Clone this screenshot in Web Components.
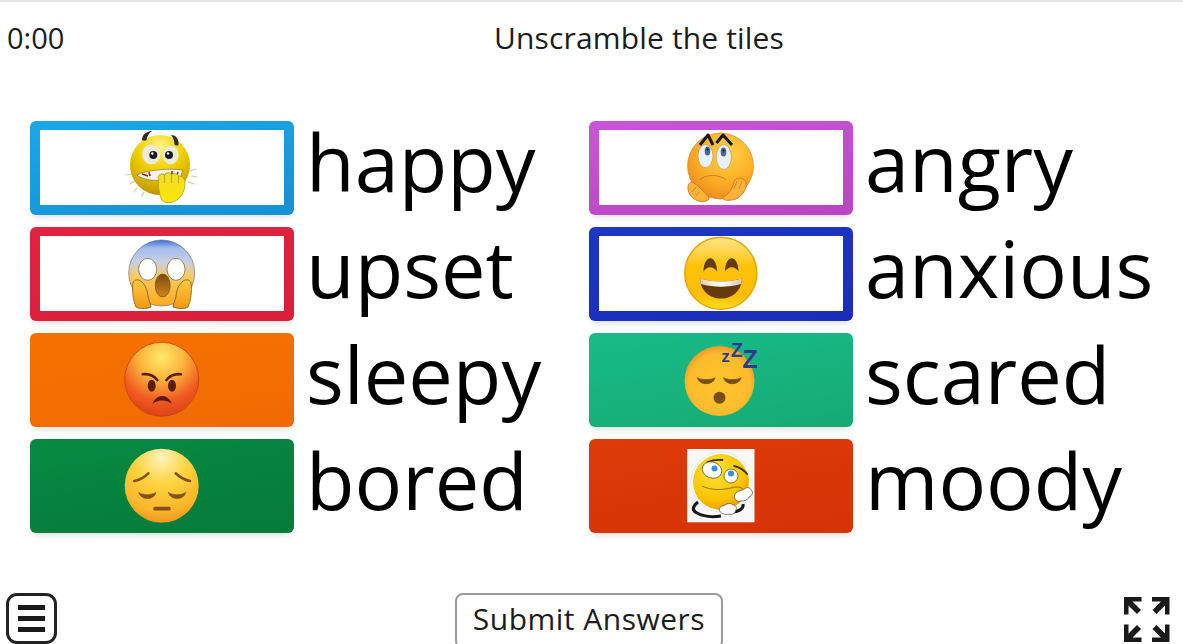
<!DOCTYPE html>
<html>
<head>
<meta charset="utf-8">
<title>Unscramble the tiles</title>
<style>
  html, body { margin: 0; height: 100%; overflow: hidden; background: #fff; }
  body { font-family: "Open Sans", sans-serif; color: #1c1c1c; }
</style>
</head>
<body>
<game-screen>
  <top-bar slot="top" title-text="Unscramble the tiles">0:00</top-bar>
  <tile-board slot="main">
    <match-row color="#1ba8e6" color2="#1590d4" outline face="nailbite">happy</match-row>
    <match-row color="#c955d8" color2="#b945c4" outline face="worried">angry</match-row>
    <match-row color="#e0243f" color2="#d91f3a" outline face="scream">upset</match-row>
    <match-row color="#1e36c6" color2="#1a2db8" outline face="grin">anxious</match-row>
    <match-row color="#f57200" color2="#f06a04" face="angry">sleepy</match-row>
    <match-row color="#18bb88" color2="#16aa74" face="sleepy">scared</match-row>
    <match-row color="#078a42" color2="#067a3a" face="pensive">bored</match-row>
    <match-row color="#df3a0a" color2="#d63206" face="moody">moody</match-row>
  </tile-board>
  <bottom-bar slot="bottom">Submit Answers</bottom-bar>
</game-screen>

<script>
const faces = {
  nailbite: `
    <defs>
      <radialGradient id="a" cx=".5" cy=".2" r=".85"><stop offset="0" stop-color="#fff48a"/><stop offset=".45" stop-color="#f0d000"/><stop offset=".85" stop-color="#c9a400"/><stop offset="1" stop-color="#a98600"/></radialGradient>
      <linearGradient id="b" x1="0" y1="0" x2="0" y2="1"><stop offset="0" stop-color="#f0dc30"/><stop offset="1" stop-color="#ffe600"/></linearGradient>
    </defs>
    <g stroke="#cfc9ae" stroke-width="1.200" stroke-linecap="round">
      <path d="M6 49l6-1M10 58l5-3M14 66l3-4M70 45l6-2M68 56l6 2M72 50l5 1M22 70l2-4"/>
    </g>
    <circle cx="40" cy="39" r="30" fill="url(#a)"/>
    <path d="M22 14c0-5 4-8.500 10-9-3 2-5 5-5.500 9-1.500 1-3 1-4.500 0zM51 9c5 0 8 4 7.500 10-1.500 1-3 .5-4-.5 0-3.500-1-6.500-3.500-9.500z" fill="#2b2b22"/>
    <ellipse cx="31.200" cy="28.500" rx="9" ry="9.800" fill="#ecebdc"/>
    <ellipse cx="50.800" cy="29" rx="7.800" ry="9.300" fill="#ecebdc"/>
    <circle cx="33.300" cy="29" r="4" fill="#1b1b1b"/><circle cx="49" cy="29" r="4" fill="#1b1b1b"/>
    <circle cx="32.300" cy="27.500" r="1.200" fill="#fff"/><circle cx="48" cy="27.500" r="1.200" fill="#fff"/>
    <path d="M16.700 49c10-5 32-7 46-5l-2 7c-12 4-34 6-44-2z" fill="#f4f1e8" stroke="#7d6a10" stroke-width=".6"/>
    <path d="M22 48l6 2M29 46l1 4M52 45v3M58 46l-1 3" stroke="#a3242a" stroke-width="1.600"/>
    <path d="M38 52c0-4 4-5 6.500-3 1-3 6-3 7 0 2-2 6-2 7 1 3 0 6 2 6.500 6 0 9-3 14-8 18-5 3-12 4-15 0-3-6-4-13-3.500-22z" fill="url(#b)" stroke="#b89a00" stroke-width=".8"/>
    <path d="M44.500 49v8M51.500 49v8M58.500 50v7" stroke="#b89a00" stroke-width=".8" fill="none"/>`,
  worried: `
    <defs>
      <radialGradient id="a" cx=".6" cy=".3" r=".75"><stop offset="0" stop-color="#ffd24a"/><stop offset=".55" stop-color="#fdb126"/><stop offset="1" stop-color="#ea8c1c"/></radialGradient>
    </defs>
    <circle cx="41.500" cy="40" r="33" fill="url(#a)" stroke="#d97e1f" stroke-width=".6"/>
    <path d="M21 19l8-10 5 10M37.500 17l6.500-8 9 10" fill="none" stroke="#161616" stroke-width="3" stroke-linejoin="round"/>
    <ellipse cx="26.500" cy="30" rx="7.500" ry="11.500" fill="#e6f1fb" stroke="#cf8a3c" stroke-width=".6"/>
    <ellipse cx="44.800" cy="31" rx="7.500" ry="12.500" fill="#e6f1fb" stroke="#cf8a3c" stroke-width=".6"/>
    <ellipse cx="28.500" cy="25" rx="2.800" ry="4.500" fill="#45689a"/><ellipse cx="44.500" cy="26" rx="2.800" ry="4.500" fill="#45689a"/>
    <circle cx="28.500" cy="23.500" r="1" fill="#111"/><circle cx="44.500" cy="24.500" r="1" fill="#111"/>
    <path d="M20.500 54c6-6 20-6 26.500 0" fill="none" stroke="#d07a2a" stroke-width="1"/>
    <path d="M9 60c1-4 4-5 6-3 5 3 9 8 15 14 1 3-3 5-8 4.500-7-1-14-7-13-15.500z" fill="#fbb13a" stroke="#d2771f" stroke-width=".9"/>
    <path d="M13 66l4-5M17 70l3-4" stroke="#d2771f" stroke-width=".7" fill="none"/>
    <path d="M44 71c5-2 9-7 11-15 1-4 6-5 9-3 3 1 4 4 3 8-2 7-8 13-15 13-4 1-9 0-8-3z" fill="#fbb13a" stroke="#d2771f" stroke-width=".9"/>
    <path d="M58 55l-3 8M63 55l-3 8" stroke="#d2771f" stroke-width=".7" fill="none"/>`,
  scream: `
    <defs>
      <linearGradient id="a" x1="0" y1="0" x2="0" y2="1"><stop offset="0" stop-color="#3c6cd8"/><stop offset=".12" stop-color="#a4bcec"/><stop offset=".32" stop-color="#c6cee6"/><stop offset=".55" stop-color="#f7ca60"/><stop offset="1" stop-color="#f8ac1e"/></linearGradient>
      <linearGradient id="b" x1="0" y1="0" x2="0" y2="1"><stop offset="0" stop-color="#ffc840"/><stop offset="1" stop-color="#f09a14"/></linearGradient>
      <linearGradient id="c" x1="0" y1="0" x2="0" y2="1"><stop offset="0" stop-color="#7c4a14"/><stop offset="1" stop-color="#d18418"/></linearGradient>
    </defs>
    <circle cx="41.700" cy="41" r="33" fill="url(#a)" stroke="#54628f" stroke-width=".6"/>
    <ellipse cx="27.700" cy="37.300" rx="9" ry="11" fill="#fff" stroke="#8a7b5c" stroke-width=".9"/>
    <ellipse cx="56" cy="37.300" rx="9" ry="11" fill="#fff" stroke="#8a7b5c" stroke-width=".9"/>
    <ellipse cx="42.700" cy="53.500" rx="7.500" ry="11.500" fill="url(#c)" stroke="#6d4610" stroke-width=".6"/>
    <path d="M13 51c1-4 6-4 9-1 4 4 5 8 6 14 1 5 3 9 3 11-5 2-12 2-15 0-3-7-4-16-3-24z" fill="url(#b)" stroke="#8a6418" stroke-width=".9"/>
    <path d="M71 51c-1-4-6-4-9-1-4 4-5 8-6 14-1 5-3 9-3 11 5 2 12 2 15 0 3-7 4-16 3-24z" fill="url(#b)" stroke="#8a6418" stroke-width=".9"/>`,
  grin: `
    <defs>
      <linearGradient id="a" x1="0" y1="0" x2="0" y2="1"><stop offset="0" stop-color="#ffe68c"/><stop offset=".4" stop-color="#ffc30a"/><stop offset=".8" stop-color="#fcbc04"/><stop offset="1" stop-color="#ffdf1a"/></linearGradient>
      <linearGradient id="b" x1="0" y1="0" x2="1" y2="0"><stop offset="0" stop-color="#e2cfb0"/><stop offset=".5" stop-color="#fff"/><stop offset="1" stop-color="#dcc8a8"/></linearGradient>
    </defs>
    <circle cx="41.800" cy="41.300" r="36" fill="url(#a)" stroke="#eea500" stroke-width="1.500"/>
    <path d="M24.500 39.700c0-18 13.500-18 13.500 0-3-6-10.500-6-13.500 0zM46 39.700c0-18 13.500-18 13.500 0-3-6-10.500-6-13.500 0z" fill="#653a0c"/>
    <path d="M21.200 46.500c13 4 28.500 4 41.600 0 0 12-9 20-20.800 20s-20.800-8-20.800-20z" fill="#663a0c"/>
    <path d="M21.200 46.500c13 4 28.500 4 41.600 0 0 2-.3 4-.8 5.500-13 3.500-27 3.500-40 0-.5-1.500-.8-3.500-.8-5.500z" fill="url(#b)"/>`,
  angry: `
    <defs>
      <radialGradient id="a" cx=".5" cy=".2" r=".85"><stop offset="0" stop-color="#ffe86a"/><stop offset=".35" stop-color="#fdb63c"/><stop offset=".7" stop-color="#f05a22"/><stop offset="1" stop-color="#d83c12"/></radialGradient>
    </defs>
    <circle cx="41.700" cy="41.300" r="37" fill="url(#a)" stroke="#c8400e" stroke-width=".8"/>
    <path d="M22.700 36.300c6-.8 11 1.500 14.600 5.700M61 36.300c-6-.8-11 1.500-14.600 5.700" fill="none" stroke="#5d1c06" stroke-width="2.600" stroke-linecap="round"/>
    <ellipse cx="31.700" cy="47.700" rx="4" ry="6" fill="#5d1c06"/><ellipse cx="52" cy="47.700" rx="4" ry="6" fill="#5d1c06"/>
    <path d="M32.700 65.500c2-5 5.500-7.500 9.500-7.500s7.500 2.500 9.500 7.500c-3-2-6-3-9.500-3s-6.500 1-9.500 3z" fill="#5d1c06"/>`,
  sleepy: `
    <defs>
      <radialGradient id="a" cx=".5" cy=".55" r=".55"><stop offset="0" stop-color="#ffc42c"/><stop offset=".8" stop-color="#fdbb2c"/><stop offset="1" stop-color="#f09a24"/></radialGradient>
    </defs>
    <circle cx="40.500" cy="43" r="35" fill="url(#a)"/>
    <path d="M18.200 39.700c5 2.500 13 2.500 18 0-2 8-16 8-18 0zM44.500 39.700c5 2.500 13 2.500 17.700 0-2 8-15.700 8-17.700 0z" fill="#7a4e12" stroke="#7a4e12" stroke-width=".6" stroke-linejoin="round"/>
    <circle cx="40.500" cy="59.700" r="6" fill="#7a4e12"/>
    <g font-family="'Liberation Sans', sans-serif" font-weight="700" fill="#2d3a8e">
      <text x="42.500" y="23.700" font-size="17">z</text>
      <text x="52" y="19.300" font-size="19.500">Z</text>
      <text x="63.500" y="30.300" font-size="25">Z</text>
    </g>`,
  pensive: `
    <defs>
      <radialGradient id="a" cx=".5" cy=".12" r=".9"><stop offset="0" stop-color="#fff3c0"/><stop offset=".4" stop-color="#fdd33e"/><stop offset=".8" stop-color="#fbb52a"/><stop offset="1" stop-color="#ef9320"/></radialGradient>
    </defs>
    <circle cx="41.700" cy="41.700" r="37" fill="url(#a)"/>
    <path d="M14.300 37c5-1 10-3.500 14-7.700M70 37c-5-1-10-3.500-14.300-7.700" fill="none" stroke="#845112" stroke-width="2.600" stroke-linecap="round"/>
    <path d="M18.700 48.500c5 3 12 3 17.300 0-2 8-15 8-17.300 0zM48.300 48.500c5 3 12 3 17.400 0-2 8-15 8-17.400 0z" fill="#845112" stroke="#845112" stroke-width=".6" stroke-linejoin="round"/>
    <rect x="33.300" y="62.700" width="17.300" height="3.700" rx="1.500" fill="#845112"/>`,
  moody: `
    <defs>
      <radialGradient id="a" cx=".4" cy=".3" r=".8"><stop offset="0" stop-color="#ffe23c"/><stop offset=".65" stop-color="#fbc300"/><stop offset="1" stop-color="#e88d00"/></radialGradient>
    </defs>
    <rect x="8.200" y="5" width="67.300" height="73.300" fill="#f8f8f8"/>
    <circle cx="42" cy="38" r="30" fill="#fff" stroke="#e4e4e4" stroke-width=".8"/>
    <path d="M19 58c-5 4-7 8-1 11 7 4 17 4 24 3M64 60c1 5-5 8-11 8" fill="none" stroke="#161616" stroke-width="3"/>
    <circle cx="42" cy="38" r="28" fill="url(#a)"/>
    <path d="M28.500 18c5-2 10-2.500 15-2M55 22c5 1 10 4 13 8" fill="none" stroke="#3b3208" stroke-width="1.800" stroke-linecap="round"/>
    <ellipse cx="33" cy="26" rx="10" ry="8" fill="#fff" stroke="#5d4a06" stroke-width=".7" transform="rotate(20 33 26)"/>
    <ellipse cx="52" cy="32" rx="7" ry="7" fill="#fff" stroke="#5d4a06" stroke-width=".7"/>
    <circle cx="35.500" cy="24.500" r="3" fill="#3a8ed8"/><circle cx="52" cy="29.500" r="3" fill="#3a8ed8"/>
    <path d="M23 42c10 5 22 4 33 1 3 0 6 0 8 2" fill="none" stroke="#9c7400" stroke-width="1"/>
    <path d="M56 50c3-4 7-3 9-5 3-2 6-2 7 1 3 2 1 6-2 7-2 4-6 4-9 4-3 2-7-3-5-7z" fill="#fff" stroke="#444" stroke-width=".7"/>
    <path d="M40 65c1-3 4-3 6-4 3-2 6-2 8 0 3 0 4 3 3 5-1 3-3 5-7 4-4 1-9 0-10-5z" fill="#fff" stroke="#444" stroke-width=".7"/>`
};

class EmojiFace extends HTMLElement {
  connectedCallback() {
    const root = this.attachShadow({mode: 'open'});
    root.innerHTML = `
      <style>
        :host { display: block; width: 84px; height: 84px; }
        svg { display: block; width: 84px; height: 84px; overflow: hidden; }
      </style>
      <svg viewBox="0 0 84 84" xmlns="http://www.w3.org/2000/svg">${faces[this.getAttribute('kind')]}</svg>`;
  }
}
customElements.define('emoji-face', EmojiFace);

class MatchRow extends HTMLElement {
  connectedCallback() {
    const color = this.getAttribute('color');
    const color2 = this.getAttribute('color2');
    const inner = this.hasAttribute('outline') ? 'background: #fff;' : '';
    const root = this.attachShadow({mode: 'open'});
    root.innerHTML = `
      <style>
        :host { display: flex; align-items: flex-start; gap: 12px; height: 94px; }
        .tile {
          flex: none; width: 264px; height: 94px; box-sizing: border-box;
          padding: 9px 10px 10px; border-radius: 6px;
          background: linear-gradient(170deg, ${color}, ${color2});
          box-shadow: 0 5px 6px -3px rgba(0,0,0,.14);
          filter: blur(.45px);
        }
        .inner {
          height: 100%; display: flex; align-items: center; justify-content: center;
          ${inner}
        }
        .word { font-size: 79.300px; line-height: 80px; color: #000; white-space: nowrap; }
      </style>
      <div class="tile"><div class="inner"><emoji-face kind="${this.getAttribute('face')}"></emoji-face></div></div>
      <span class="word"><slot></slot></span>`;
  }
}
customElements.define('match-row', MatchRow);

class TileBoard extends HTMLElement {
  constructor() {
    super();
    this.attachShadow({mode: 'open'}).innerHTML = `
      <style>
        :host { display: grid; grid-template-columns: 559px 1fr; row-gap: 12px; padding: 0 0 0 30px; }
      </style>
      <slot></slot>`;
  }
}
customElements.define('tile-board', TileBoard);

class TopBar extends HTMLElement {
  connectedCallback() {
    this.attachShadow({mode: 'open'}).innerHTML = `
      <style>
        :host { display: grid; grid-template-columns: 88px 1fr; align-items: center; height: 70px; padding: 0 0 0 7px; font-size: 29px; color: #1c1c1c; }
        .title { text-align: center; font-size: 30px; letter-spacing: .15px; }
      </style>
      <div class="time"><slot></slot></div>
      <div class="title">${this.getAttribute('title-text')}</div>`;
  }
}
customElements.define('top-bar', TopBar);

class BottomBar extends HTMLElement {
  constructor() {
    super();
    this.attachShadow({mode: 'open'}).innerHTML = `
      <style>
        :host { display: flex; align-items: flex-start; padding: 0 13px 0 6px; height: 51px; }
        .menu {
          width: 51px; height: 51px; box-sizing: border-box; border: 3px solid #222; border-radius: 11px;
          display: flex; flex-direction: column; justify-content: center; align-items: center; gap: 6px;
        }
        .menu i { display: block; width: 27px; height: 5px; background: #1a1a1a; }
        button {
          width: 268px; height: 56px; margin: 0 0 0 398px; box-sizing: border-box; border: 2px solid #9a9a9a; border-radius: 8px;
          background: #fff; color: #1c1c1c; font: 30px "Open Sans", sans-serif; letter-spacing: .5px; padding: 0 0 6px;
        }
        svg { display: block; width: 46px; height: 46px; margin: 4px 0 0 auto; }
      </style>
      <div class="menu"><i></i><i></i><i></i></div>
      <button><slot></slot></button>
      <svg viewBox="0 0 46 46" fill="#1a1a1a">
        <path id="c" d="M0 0H17.500V4.500H8.500L17 13 13 17 4.500 8.500V17.500H0Z"/>
        <use href="#c" transform="matrix(-1 0 0 1 45.500 0)"/>
        <use href="#c" transform="matrix(1 0 0 -1 0 45)"/>
        <use href="#c" transform="matrix(-1 0 0 -1 45.500 45)"/>
      </svg>`;
  }
}
customElements.define('bottom-bar', BottomBar);

class GameScreen extends HTMLElement {
  constructor() {
    super();
    this.attachShadow({mode: 'open'}).innerHTML = `
      <style>
        :host { display: flex; flex-direction: column; height: 100vh; box-sizing: border-box; border-top: 2px solid #e2e2e2; }
        main { flex: 1; padding-top: 49px; }
      </style>
      <slot name="top"></slot>
      <main><slot name="main"></slot></main>
      <slot name="bottom"></slot>`;
  }
}
customElements.define('game-screen', GameScreen);
</script>
</body>
</html>
